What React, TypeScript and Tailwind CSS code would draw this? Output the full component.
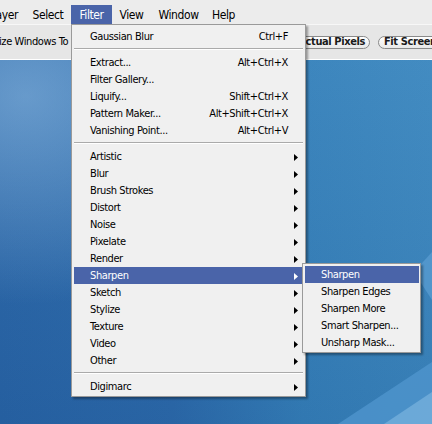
import React from "react";

type Item =
  | { type: "sep" }
  | { type: "item"; label: string; shortcut?: string; sub?: boolean; active?: boolean };

const mainItems: Item[] = [
  { type: "item", label: "Gaussian Blur", shortcut: "Ctrl+F" },
  { type: "sep" },
  { type: "item", label: "Extract...", shortcut: "Alt+Ctrl+X" },
  { type: "item", label: "Filter Gallery..." },
  { type: "item", label: "Liquify...", shortcut: "Shift+Ctrl+X" },
  { type: "item", label: "Pattern Maker...", shortcut: "Alt+Shift+Ctrl+X" },
  { type: "item", label: "Vanishing Point...", shortcut: "Alt+Ctrl+V" },
  { type: "sep" },
  { type: "item", label: "Artistic", sub: true },
  { type: "item", label: "Blur", sub: true },
  { type: "item", label: "Brush Strokes", sub: true },
  { type: "item", label: "Distort", sub: true },
  { type: "item", label: "Noise", sub: true },
  { type: "item", label: "Pixelate", sub: true },
  { type: "item", label: "Render", sub: true },
  { type: "item", label: "Sharpen", sub: true, active: true },
  { type: "item", label: "Sketch", sub: true },
  { type: "item", label: "Stylize", sub: true },
  { type: "item", label: "Texture", sub: true },
  { type: "item", label: "Video", sub: true },
  { type: "item", label: "Other", sub: true },
  { type: "sep" },
  { type: "item", label: "Digimarc", sub: true },
];

const subItems = [
  { label: "Sharpen", active: true },
  { label: "Sharpen Edges" },
  { label: "Sharpen More" },
  { label: "Smart Sharpen..." },
  { label: "Unsharp Mask..." },
];

function Arrow() {
  return (
    <svg width="4" height="7" viewBox="0 0 4 7" className="shrink-0">
      <path d="M0 0L4 3.5L0 7Z" fill="currentColor" />
    </svg>
  );
}

const barItems = [
  { label: "Layer", w: "w-[42px] -ml-[17px]" },
  { label: "Select", w: "w-[46px]" },
  { label: "Filter", w: "w-[41px]", active: true },
  { label: "View", w: "w-[39px]" },
  { label: "Window", w: "w-[55px]" },
  { label: "Help", w: "w-[35px]" },
];

export default function App() {
  return (
    <div className="relative flex h-[424px] w-[432px] flex-col overflow-hidden font-['DejaVu_Sans_Condensed','DejaVu_Sans',sans-serif] text-black">
      {/* Menu bar */}
      <div className="flex h-[24px] shrink-0 items-start bg-[#ececec] pt-[5px] text-[12px] tracking-[-0.4px]">
        {barItems.map((b) => (
          <div
            key={b.label}
            className={`flex h-[19px] shrink-0 items-center justify-center pt-[1px] ${b.w} ${
              b.active ? "bg-[#4a64a9] text-white" : ""
            }`}
          >
            {b.label}
          </div>
        ))}
      </div>

      {/* Options bar */}
      <div className="flex h-[35px] shrink-0 items-center overflow-hidden whitespace-nowrap border-t border-[#f7f7f7] bg-[#e6e6e6] text-[11px] tracking-[-0.4px]">
        <div className="flex w-[378px] shrink-0 items-center">
          <span className="-ml-[1px] min-w-0 flex-1 overflow-hidden">ize Windows To Fit Screen</span>
          <span className="mr-[8px] flex h-[13px] items-center rounded-full border border-[#8a8a8a] bg-[linear-gradient(to_bottom,#ffffff,#e8e8e8)] px-[4px] font-bold text-[#1a1a1a]">
            Actual Pixels
          </span>
        </div>
        <span className="flex h-[13px] shrink-0 items-center rounded-full border border-[#8a8a8a] bg-[linear-gradient(to_bottom,#ffffff,#e8e8e8)] px-[5px] font-bold text-[#1a1a1a]">
          Fit Screen
        </span>
        <span className="ml-[8px] flex h-[13px] shrink-0 items-center rounded-full border border-[#8a8a8a] bg-[linear-gradient(to_bottom,#ffffff,#e8e8e8)] px-[5px] font-bold text-[#1a1a1a]">
          Print Size
        </span>
      </div>

      {/* Canvas / desktop */}
      <div className="relative flex-1 border-t border-white bg-[image:radial-gradient(ellipse_at_6%_10%,rgba(140,185,225,0.6),rgba(140,185,225,0)_45%),linear-gradient(to_bottom,rgba(255,255,255,0.04),rgba(0,10,60,0.08)),linear-gradient(to_right,#2866a8_0%,#2c6cad_40%,#3581bb_70%,#3b87bf_100%)]">
        <svg
          className="absolute inset-0"
          width="432"
          height="364"
          viewBox="0 0 432 364"
        >
          <polygon points="338,364 432,302 432,364" fill="#4f95cd" opacity="0.8" />
          <polygon points="384,364 432,332 432,364" fill="#74afdc" opacity="0.8" />
          <polygon points="414,212 432,192 432,240" fill="#5b9ed3" opacity="0.7" />
        </svg>
      </div>

      {/* Filter menu */}
      <div className="absolute left-[71px] top-[24px] w-[235px] border border-[#9a9a9a] bg-[#f0f0f0] px-[2px] pb-[1px] pt-[3px] text-[11px] tracking-[-0.4px] shadow-[2px_2px_2px_rgba(0,0,0,0.35)]">
        {mainItems.map((it, i) =>
          it.type === "sep" ? (
            <div key={i} className="h-[9px] pt-[3px]">
              <div className="h-[2px] border-t border-[#aaaaaa] border-b border-b-white" />
            </div>
          ) : (
            <div
              key={i}
              className={`flex h-[17px] items-center pl-[16px] pr-[5px] pt-[1px] ${
                it.active ? "bg-[#4a64a9] text-white" : ""
              }`}
            >
              <span className="flex-1 whitespace-nowrap">{it.label}</span>
              {it.shortcut && <span className="whitespace-nowrap pr-[10px]">{it.shortcut}</span>}
              {it.sub && <Arrow />}
            </div>
          )
        )}
      </div>

      {/* Sharpen submenu */}
      <div className="absolute left-[302px] top-[263px] w-[119px] border border-[#9a9a9a] bg-[#f0f0f0] pb-[1px] pl-[2px] pr-[1px] pt-[2px] text-[11px] tracking-[-0.4px] shadow-[2px_2px_2px_rgba(0,0,0,0.35)]">
        {subItems.map((s) => (
          <div
            key={s.label}
            className={`flex h-[17px] items-center whitespace-nowrap pl-[16px] pt-[1px] ${
              s.active ? "bg-[#4a64a9] text-white" : ""
            }`}
          >
            {s.label}
          </div>
        ))}
      </div>
    </div>
  );
}
